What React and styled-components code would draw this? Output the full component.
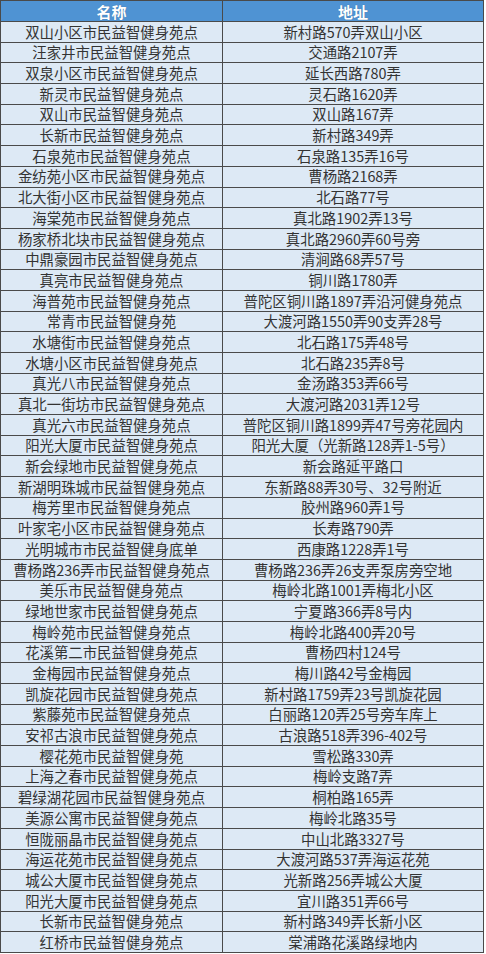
import React from 'react'
import styled, { createGlobalStyle } from 'styled-components';

const rows = [
    ['双山小区市民益智健身苑点', '新村路570弄双山小区'],
    ['汪家井市民益智健身苑点', '交通路2107弄'],
    ['双泉小区市民益智健身苑点', '延长西路780弄'],
    ['新灵市民益智健身苑点', '灵石路1620弄'],
    ['双山市民益智健身苑点', '双山路167弄'],
    ['长新市民益智健身苑点', '新村路349弄'],
    ['石泉苑市民益智健身苑点', '石泉路135弄16号'],
    ['金纺苑小区市民益智健身苑点', '曹杨路2168弄'],
    ['北大街小区市民益智健身苑点', '北石路77号'],
    ['海棠苑市民益智健身苑点', '真北路1902弄13号'],
    ['杨家桥北块市民益智健身苑点', '真北路2960弄60号旁'],
    ['中鼎豪园市民益智健身苑点', '清涧路68弄57号'],
    ['真亮市民益智健身苑点', '铜川路1780弄'],
    ['海普苑市民益智健身苑点', '普陀区铜川路1897弄沿河健身苑点'],
    ['常青市民益智健身苑', '大渡河路1550弄90支弄28号'],
    ['水塘街市民益智健身苑点', '北石路175弄48号'],
    ['水塘小区市民益智健身苑点', '北石路235弄8号'],
    ['真光八市民益智健身苑点', '金汤路353弄66号'],
    ['真北一街坊市民益智健身苑点', '大渡河路2031弄12号'],
    ['真光六市民益智健身苑点', '普陀区铜川路1899弄47号旁花园内'],
    ['阳光大厦市民益智健身苑点', '阳光大厦（光新路128弄1-5号）'],
    ['新会绿地市民益智健身苑点', '新会路延平路口'],
    ['新湖明珠城市民益智健身苑点', '东新路88弄30号、32号附近'],
    ['梅芳里市民益智健身苑点', '胶州路960弄1号'],
    ['叶家宅小区市民益智健身苑点', '长寿路790弄'],
    ['光明城市市民益智健身底单', '西康路1228弄1号'],
    ['曹杨路236弄市民益智健身苑点', '曹杨路236弄26支弄泵房旁空地'],
    ['美乐市民益智健身苑点', '梅岭北路1001弄梅北小区'],
    ['绿地世家市民益智健身苑点', '宁夏路366弄8号内'],
    ['梅岭苑市民益智健身苑点', '梅岭北路400弄20号'],
    ['花溪第二市民益智健身苑点', '曹杨四村124号'],
    ['金梅园市民益智健身苑点', '梅川路42号金梅园'],
    ['凯旋花园市民益智健身苑点', '新村路1759弄23号凯旋花园'],
    ['紫藤苑市民益智健身苑点', '白丽路120弄25号旁车库上'],
    ['安祁古浪市民益智健身苑点', '古浪路518弄396-402号'],
    ['樱花苑市民益智健身苑', '雪松路330弄'],
    ['上海之春市民益智健身苑点', '梅岭支路7弄'],
    ['碧绿湖花园市民益智健身苑点', '桐柏路165弄'],
    ['美源公寓市民益智健身苑点', '梅岭北路35号'],
    ['恒陇丽晶市民益智健身苑点', '中山北路3327号'],
    ['海运花苑市民益智健身苑点', '大渡河路537弄海运花苑'],
    ['城公大厦市民益智健身苑点', '光新路256弄城公大厦'],
    ['阳光大厦市民益智健身苑点', '宜川路351弄66号'],
    ['长新市民益智健身苑点', '新村路349弄长新小区'],
    ['红桥市民益智健身苑点', '棠浦路花溪路绿地内'],
];

const GlobalStyle = createGlobalStyle`
    html, body {
        margin: 0;
        padding: 0;
        background: #ffffff;
    }
`;

export default function App() {
    return (
        <>
            <GlobalStyle />
            <TableGrid>
                <HeadCell>名称</HeadCell>
                <HeadCell>地址</HeadCell>
                {rows.map(([name, addr], i) => (
                    <React.Fragment key={i}>
                        <Cell>{name}</Cell>
                        <Cell>{addr}</Cell>
                    </React.Fragment>
                ))}
            </TableGrid>
        </>
    )
}

const TableGrid = styled.div`
    display: grid;
    grid-template-columns: 221px 1fr;
    grid-template-rows: 20px repeat(45, 1fr);
    gap: 1px;
    padding: 1px;
    width: 484px;
    height: 953px;
    box-sizing: border-box;
    background-color: #4a4a4a;
    font-family: "Noto Sans CJK SC", "Noto Sans", sans-serif;
`;

const Cell = styled.div`
    display: flex;
    align-items: center;
    justify-content: center;
    background-color: #dde9f5;
    color: #333333;
    font-size: 14.4px;
    line-height: 1;
    white-space: nowrap;
    overflow: hidden;
`;

const HeadCell = styled(Cell)`
    background-color: #4f93d3;
    color: #ffffff;
    font-weight: 700;
    font-size: 15px;
    text-shadow: 0 0 1px rgba(0, 0, 0, 0.25);
`;
